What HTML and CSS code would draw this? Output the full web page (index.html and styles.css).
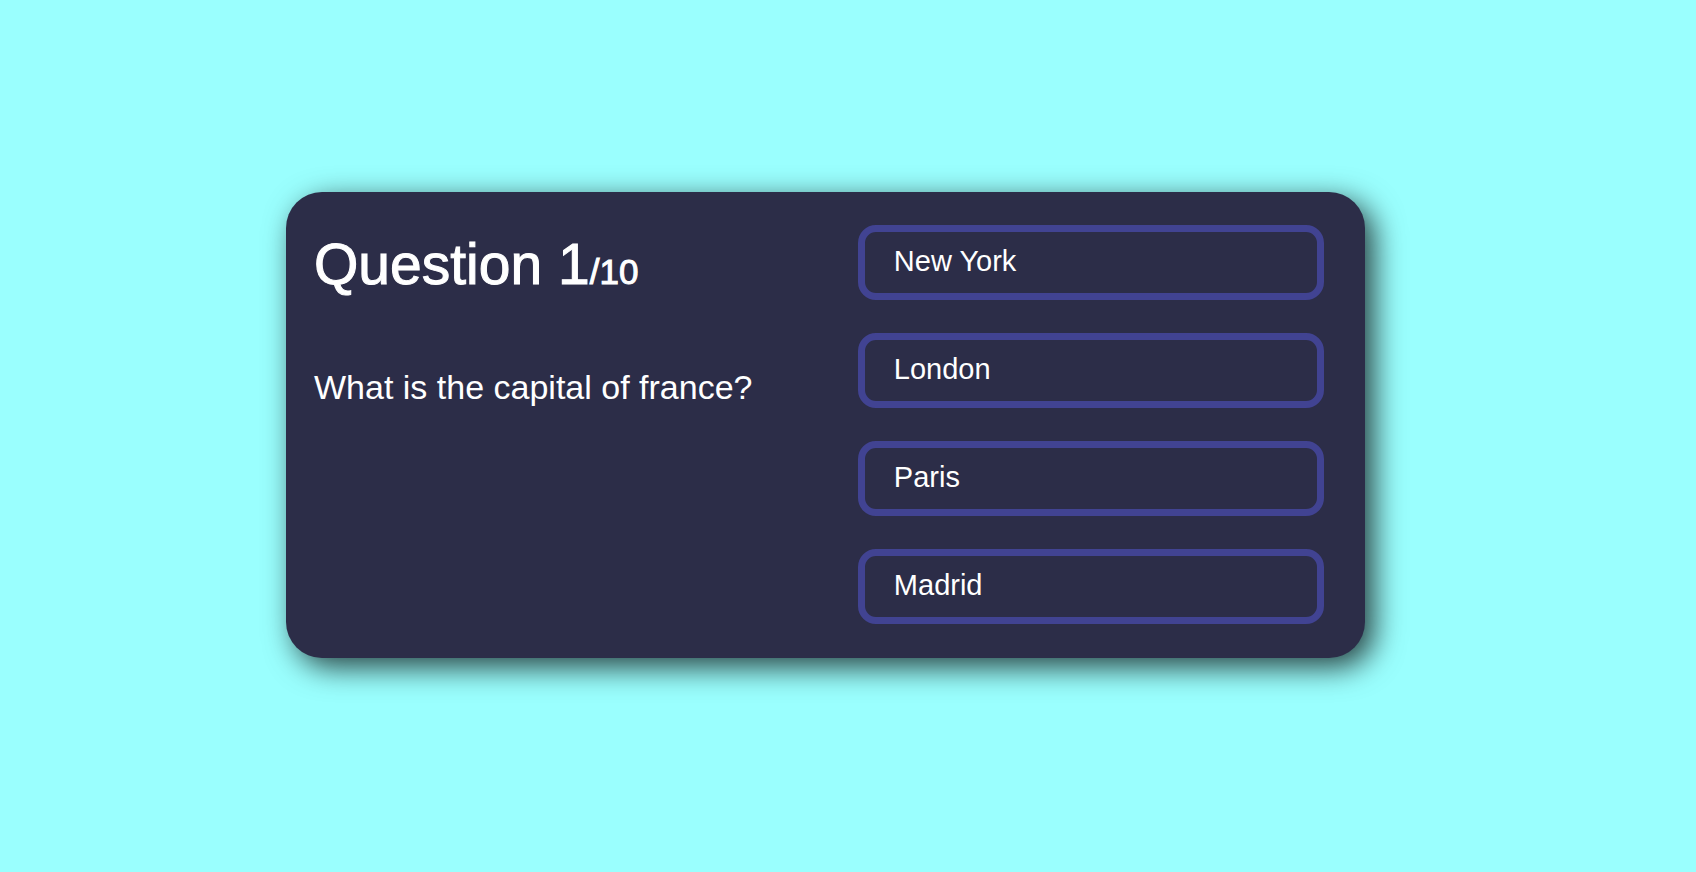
FILE: index.html
```html
<!DOCTYPE html>
<html lang="en">
<head>
<meta charset="utf-8">
<meta name="viewport" content="width=device-width, initial-scale=1">
<title>Quiz</title>
<link rel="stylesheet" href="styles.css">
</head>
<body>
<main class="quiz">
  <section class="question">
    <h1 class="question-count">Question 1<span class="question-total">/10</span></h1>
    <p class="question-text">What is the capital of france?</p>
  </section>
  <section class="answers" aria-label="Answers">
    <button class="answer" type="button">New York</button>
    <button class="answer" type="button">London</button>
    <button class="answer" type="button">Paris</button>
    <button class="answer" type="button">Madrid</button>
  </section>
</main>
</body>
</html>
```

FILE: styles.css
```css
* {
  box-sizing: border-box;
}

body {
  display: flex;
  align-items: center;
  justify-content: center;
  min-height: 100vh;
  margin: 0;
  padding: 0 45px 22px 0;
  background: #9afffe;
  color: #ffffff;
  font-family: "Liberation Sans", Arial, Helvetica, sans-serif;
}

.quiz {
  display: grid;
  grid-template-columns: 7fr 6fr;
  width: 100%;
  max-width: 1079px;
  padding: 33px 41px 34px 28px;
  border-radius: 36px;
  background: #2c2d48;
  box-shadow: 9px 9px 30px rgba(0, 0, 0, 0.75);
}

.question-count {
  margin: 6px 0 62px;
  font-size: 57px;
  font-weight: 400;
  line-height: 66px;
  -webkit-text-stroke: 1px currentColor;
}

.question-total {
  font-size: 35px;
}

.question-text {
  margin: 0;
  font-size: 34px;
  line-height: 40px;
}

.answers {
  display: flex;
  flex-direction: column;
  gap: 33px;
}

.answer {
  width: 100%;
  padding: 13px 29px 15px;
  border: 7px solid #414392;
  border-radius: 18px;
  background: transparent;
  color: inherit;
  font: inherit;
  font-size: 29px;
  line-height: 33px;
  text-align: left;
  cursor: pointer;
}
```
